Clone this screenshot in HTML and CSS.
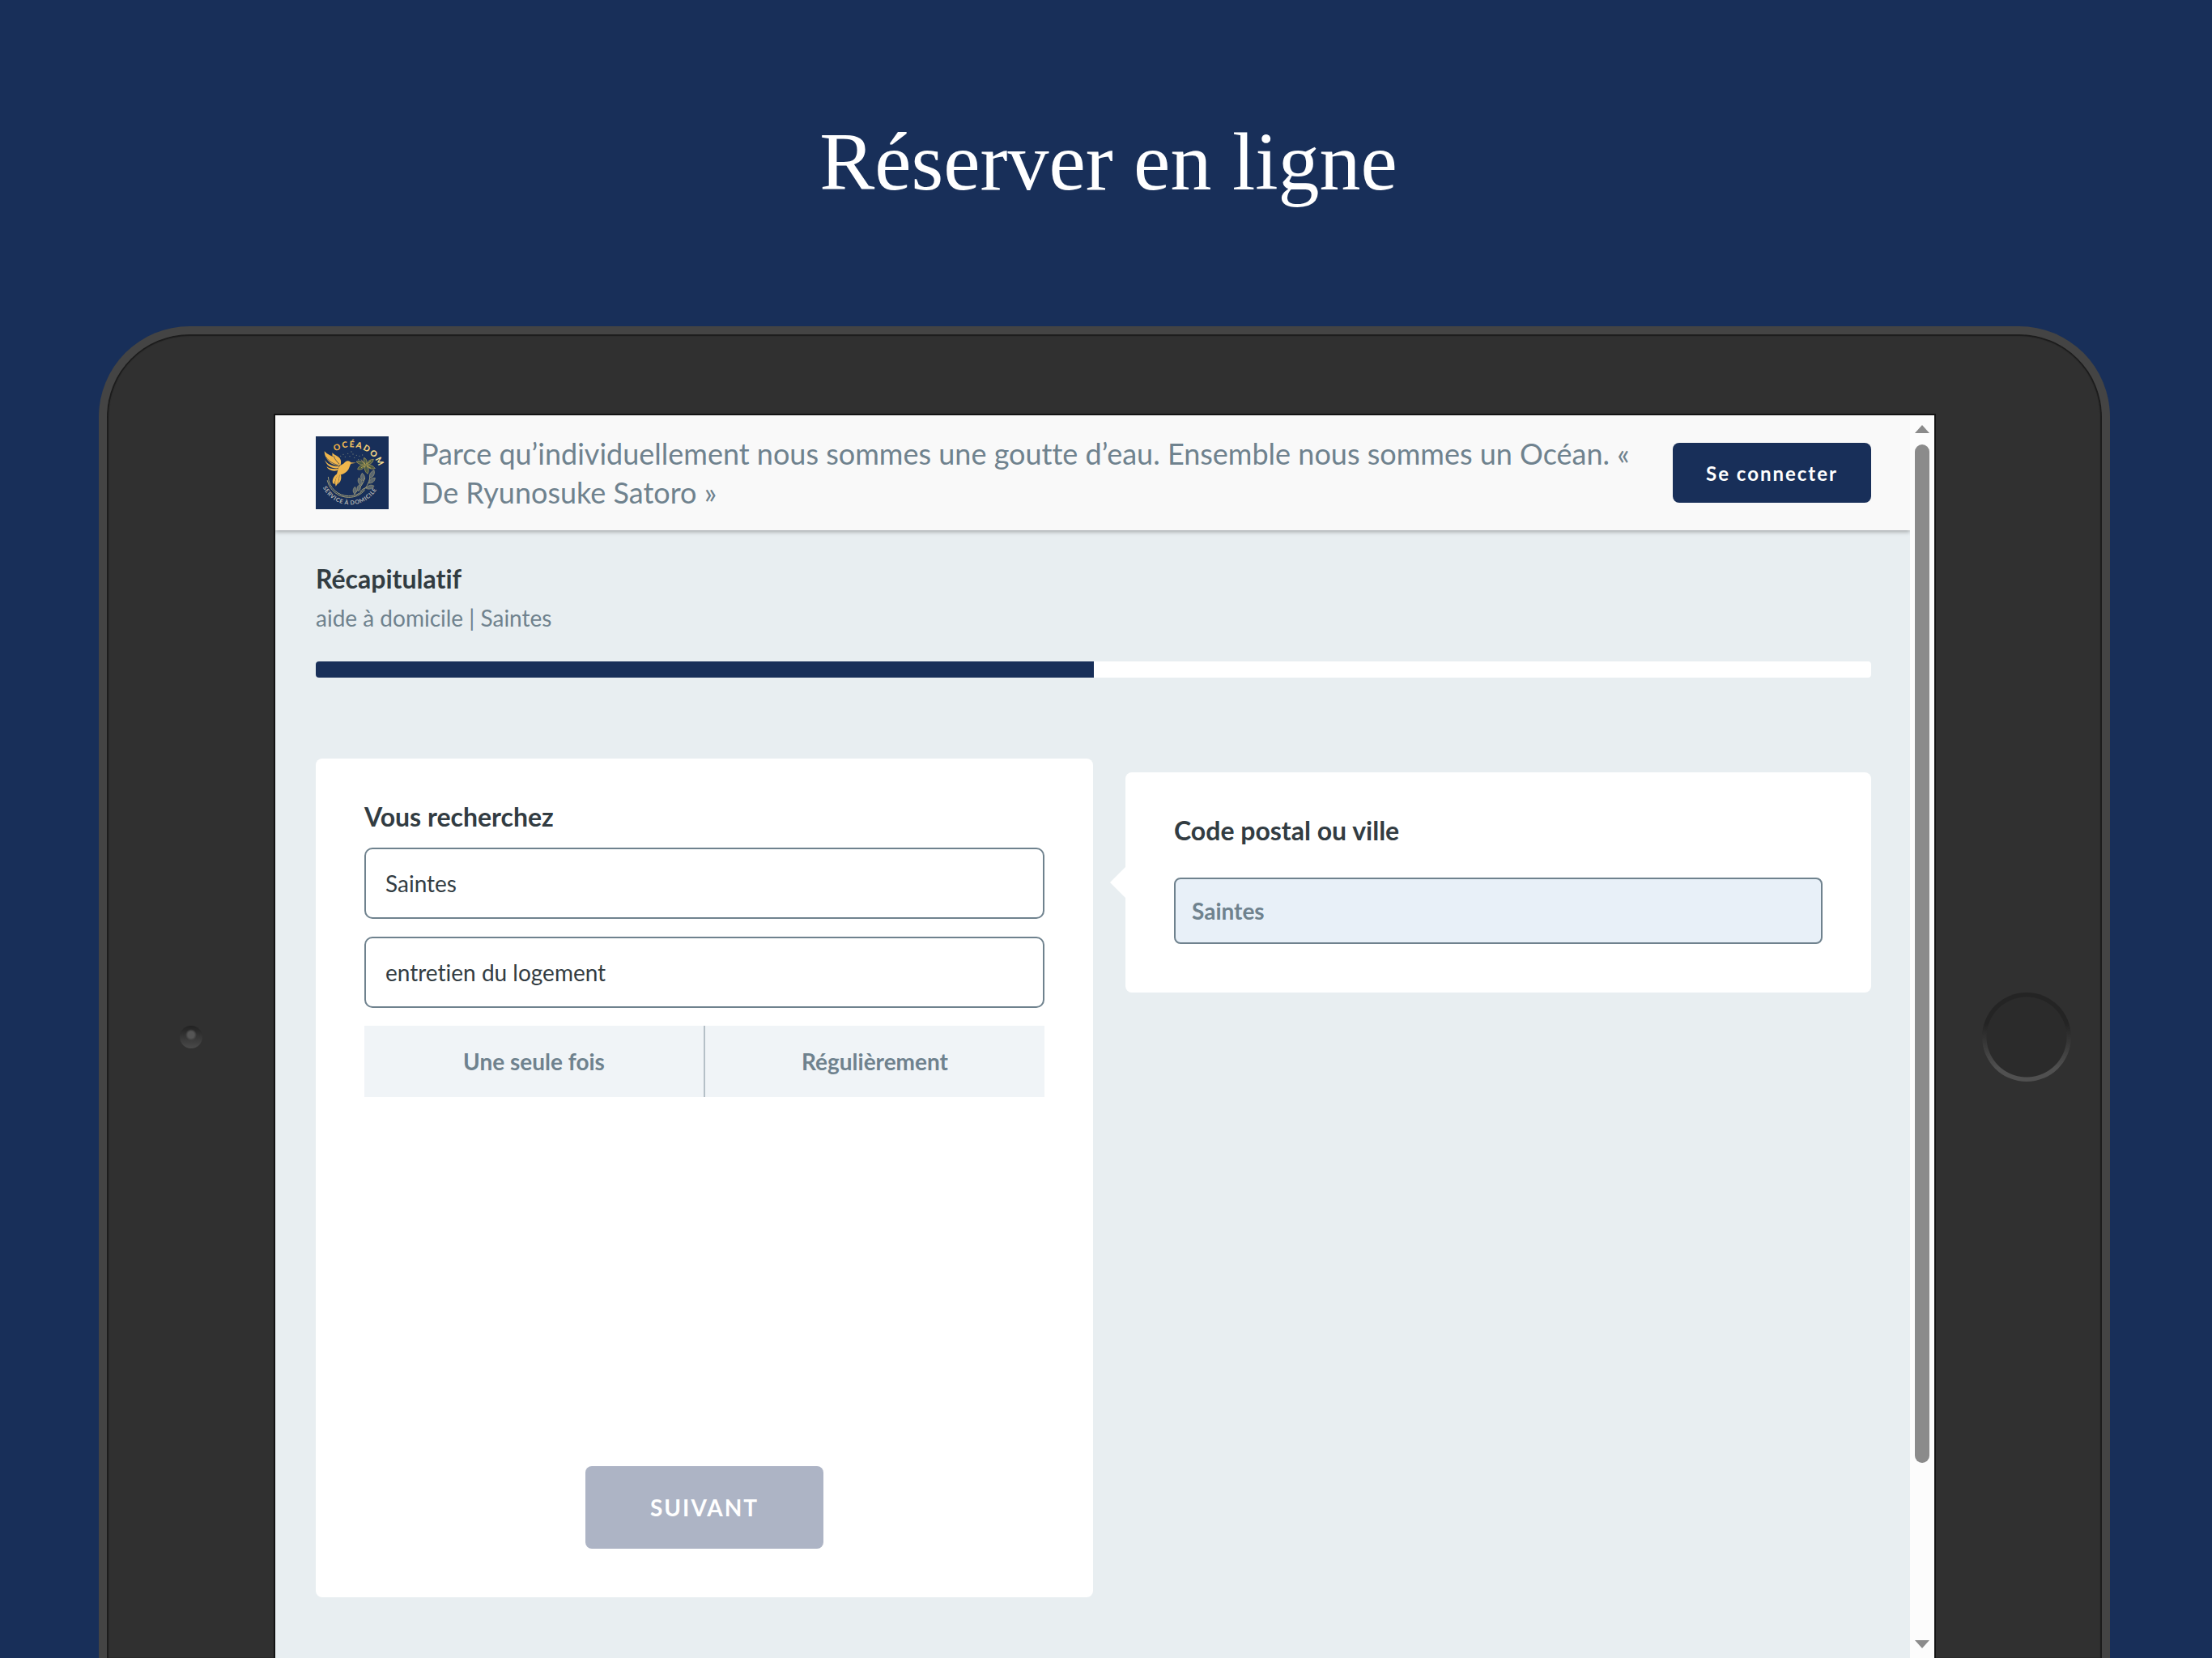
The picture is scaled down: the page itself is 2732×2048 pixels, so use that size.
FILE: index.html
```html
<!DOCTYPE html>
<html lang="fr">
<head>
    <meta charset="UTF-8">
    <meta name="viewport" content="width=device-width, initial-scale=1">
    <title>Océadom - Réserver en ligne</title>
    <link rel="stylesheet" href="styles.css">
</head>
<body>

<h1 class="page-title">Réserver en ligne</h1>

<div class="tablet">
    <div class="bezel"><span class="camera"></span></div>

    <div class="screen">
        <div class="app">

            <!-- Header -->
            <header class="header">
                <svg class="logo" viewBox="0 0 270 270" role="img" aria-label="Océadom, service à domicile">
                    <defs>
                        <path id="arc-top" d="M20 150a110 110 0 0 1 220 0"/>
                        <path id="arc-bottom" d="M15 140a113 113 0 0 0 226 0"/>
                        <linearGradient id="gold" x1="0" x2="1">
                            <stop offset="0" stop-color="#f0ad3c"/>
                            <stop offset="1" stop-color="#f4e39a"/>
                        </linearGradient>
                    </defs>
                    <rect width="270" height="270" fill="#182f59"/>
                    <text class="logo-name" fill="url(#gold)"><textPath href="#arc-top" startOffset="61%" text-anchor="middle">OCÉADOM</textPath></text>
                    <text class="logo-tag"><textPath href="#arc-bottom" startOffset="49%" text-anchor="middle">SERVICE À DOMICILE</textPath></text>
                    <!-- bird -->
                    <g fill="#f0b64c">
                        <path d="M32 55c0 20 12 38 30 48l25 9c4-14 0-25-12-31C58 73 42 67 32 55z"/>
                        <path d="M61 61c-1 15 5 27 16 36l14 11c5-14 2-26-9-33-8-5-16-8-21-14z"/>
                        <path d="M33 87c9 15 24 23 52 25l-2 6c-24 2-42-8-50-31z"/>
                        <path d="M40 112c12 9 27 11 45 7l-6 8c-16 4-32-1-39-15z"/>
                        <path d="M85 114c8-9 17-10 22-17 7-8 17-9 23 0l20 1-20 3c-5 8-6 20-14 28-8 9-24 15-40 16 4-8 5-21 9-31z"/>
                        <path d="M80 139c-14 8-20 22-17 34l7 5c0-13 4-25 13-35z"/>
                        <path d="M83 143c-11 10-13 27-9 42 8-9 13-24 13-42z"/>
                        <path d="M88 142c0 15-3 26-7 35 12-7 15-21 12-35z"/>
                    </g>
                    <g fill="none" stroke="#182f59" stroke-width="2">
                        <path d="M38 77c10 15 26 25 48 31M66 72c5 14 12 22 21 30"/>
                    </g>
                    <!-- flower and stems -->
                    <g fill="none" stroke="#a5a078" stroke-width="3" stroke-linecap="round">
                        <path d="M46 151c3 40 36 70 76 70 44 0 76-32 80-78"/>
                        <path d="M43 164c9 38 42 62 79 62 24 0 44-9 59-26"/>
                        <path d="M143 214c16-20 32-34 39-60M165 204c12-14 28-17 43-15"/>
                    </g>
                    <g fill="#5c6870" stroke="#a5a078" stroke-width="2">
                        <path d="M175 165c-11-8-10-20-3-29 11 9 12 20 3 29zM169 181c-13-5-15-17-10-27 12 6 16 17 10 27zM201 155c-5-14 3-25 15-30 4 15-2 25-15 30zM197 174c1-14 12-21 23-20-1 13-10 20-23 20zM187 193c6-12 18-16 29-9-7 11-18 14-29 9zM144 214c-8-9-7-19 1-27 8 9 8 19-1 27zM158 203c-8-9-5-18 4-24 6 9 5 18-4 24z"/>
                    </g>
                    <g fill="#4c5c45" stroke="#b8a45c" stroke-width="2">
                        <path d="M184 106c-5-10-8-17-5-27 9 4 12 12 9 23 5-12 14-16 26-17-2 12-11 19-23 21 13-1 22 3 29 13-13 4-24 0-31-9 7 9 9 18 3 29-9-7-13-17-9-28-7 10-16 14-28 11 3-11 13-17 24-16-13 0-21-4-29-12 12-5 24-2 34 12z"/>
                        <path d="M184 106l-16-20M186 106l18-15M185 108l-17 8M188 108l16 10" stroke="#e6be52"/>
                    </g>
                    <g fill="#6f7b74">
                        <circle cx="92" cy="73" r="2"/><circle cx="102" cy="67" r="2"/><circle cx="109" cy="76" r="2"/>
                        <circle cx="119" cy="64" r="2"/><circle cx="126" cy="74" r="2"/><circle cx="138" cy="66" r="2"/>
                        <circle cx="143" cy="79" r="2"/><circle cx="151" cy="70" r="2"/><circle cx="162" cy="73" r="2"/>
                        <circle cx="158" cy="86" r="2"/><circle cx="132" cy="57" r="2"/><circle cx="173" cy="69" r="2"/>
                    </g>
                </svg>
                <p class="slogan">Parce qu’individuellement nous sommes une goutte d’eau. Ensemble nous sommes un Océan. « De Ryunosuke Satoro »</p>
                <button type="button" class="btn btn-login">Se connecter</button>
            </header>

            <!-- Récapitulatif -->
            <section class="summary">
                <h2>Récapitulatif</h2>
                <p class="summary-text">aide à domicile | Saintes</p>
                <div class="progress"><div class="progress-bar" style="width: 50%"></div></div>
            </section>

            <!-- Formulaire -->
            <main class="steps">
                <form class="card search">
                    <h2>Vous recherchez</h2>
                    <input type="text" class="field" aria-label="Ville" value="Saintes">
                    <input type="text" class="field" aria-label="Service" value="entretien du logement">
                    <div class="frequency">
                        <button type="button">Une seule fois</button>
                        <button type="button">Régulièrement</button>
                    </div>
                    <button type="submit" class="btn btn-next" disabled>SUIVANT</button>
                </form>

                <div class="card place">
                    <label for="ville">Code postal ou ville</label>
                    <input type="text" id="ville" class="field field-filled" value="Saintes">
                </div>
            </main>
        </div>

        <div class="scrollbar">
            <svg class="arrow" viewBox="0 0 18 10"><path d="M9 0l9 10H0z"/></svg>
            <div class="track"><div class="thumb"></div></div>
            <svg class="arrow" viewBox="0 0 18 10"><path d="M0 0h18L9 10z"/></svg>
        </div>
    </div>

    <div class="bezel bezel-home"><span class="home"></span></div>
</div>

</body>
</html>
```
FILE: styles.css
```css
* { box-sizing: border-box; }
body { margin: 0; height: 100vh; display: flex; flex-direction: column; overflow: hidden; background: #182f59; font-family: Lato, sans-serif; font-variant-ligatures: none; color: #323c42; }
h1, h2, p { margin: 0; }
button, input { font-family: inherit; font-variant-ligatures: none; margin: 0; }

.page-title { padding: 140px 0 143px 6px; font: 400 102px/120px "Liberation Serif", serif; color: #fff; text-align: center; }

/* Tablet */
.tablet { flex: 1; min-height: 0; display: grid; grid-template-columns: 208px 1fr 207px; margin: 0 126px 0 122px; padding-top: 100px; border: 10px solid #444; border-bottom: 0; border-radius: 112px 112px 0 0; background: #303030; box-shadow: inset 0 2px 1px #1c1c1c, inset 2px 0 1px #1c1c1c, inset -2px 0 1px #1c1c1c; }
.bezel { display: flex; align-items: center; justify-content: center; }
.bezel-home { padding-left: 20px; }
.camera { width: 28px; height: 28px; border-radius: 50%; background: radial-gradient(circle at 50% 40%, #555 0 4px, transparent 7px), linear-gradient(#222, #4a4a4a); }
.home { width: 110px; height: 110px; border-radius: 50%; background: radial-gradient(circle closest-side, #2b2b2b 49px, transparent 50px), linear-gradient(#242424 35%, #505050 85%); }
.screen { display: flex; min-width: 0; min-height: 0; background: #fcfcfc; box-shadow: 0 0 0 2px #131313; }
.app { flex: 1; min-width: 0; background: #e8eef1; overflow: hidden; }

/* Header */
.header { display: flex; align-items: center; gap: 40px; padding: 23px 48px 23px 50px; background: #f9f9f9; box-shadow: 0 2px 5px rgba(0,0,0,0.3); }
.logo { flex: none; width: 90px; height: 90px; }
.logo-name { font: 900 31px Lato, sans-serif; letter-spacing: 5px; }
.logo-tag { font: 700 21px Lato, sans-serif; letter-spacing: 2px; fill: #b9b8b4; }
.slogan { flex: 1; font-size: 36px; line-height: 48px; color: #6f828e; }
.btn { border: 0; border-radius: 8px; background: #182f59; color: #fff; font-weight: 700; }
.btn-login { width: 245px; height: 74px; font-size: 24px; letter-spacing: 2px; }

/* Summary */
.summary { padding: 36px 48px 39px 50px; }
h2, label { display: block; font-size: 32px; line-height: 48px; font-weight: 700; }
.summary-text { font-size: 28px; line-height: 48px; color: #6f828e; }
.progress { margin-top: 30px; height: 20px; border-radius: 4px; background: #fff; overflow: hidden; }
.progress-bar { height: 100%; background: #182f59; }

/* Cards */
.steps { display: grid; grid-template-columns: 960fr 921fr; gap: 40px; align-items: start; padding: 61px 48px 0 50px; }
.card { background: #fff; border-radius: 8px; padding: 48px 60px 60px; }
.search { display: flex; flex-direction: column; min-height: 1036px; }
.field { width: 100%; height: 88px; padding: 0 24px; border: 2px solid #6f828e; border-radius: 10px; background: #fff; font-size: 28px; color: #323c42; }
.search .field { margin-bottom: 22px; }
.search h2 { margin-bottom: 14px; }
.frequency { display: flex; }
.frequency button { flex: 1; height: 88px; border: 0; background: #f0f4f7; font-size: 28px; font-weight: 700; color: #6f828e; }
.frequency button + button { border-left: 2px solid #b5c0c7; }
.btn-next { width: 294px; height: 102px; margin: auto auto 0; font-size: 28px; letter-spacing: 2px; background: #adb4c5; }

.place { position: relative; margin-top: 17px; }
.place::before { content: ""; position: absolute; left: -19px; top: 116px; border: 20px solid transparent; border-left: 0; border-right-color: #fff; }
.place .field { height: 82px; margin-top: 34px; padding: 0 20px; }
.field-filled { background: #e8f0f8; font-weight: 700; color: #6f828e; border-radius: 8px; }

/* Scrollbar */
.scrollbar { flex: none; width: 30px; display: flex; flex-direction: column; align-items: center; gap: 14px; padding: 12px 0; }
.arrow { width: 18px; height: 10px; fill: #8b8b8b; }
.track { flex: 1; width: 18px; }
.thumb { height: 86%; border-radius: 9px; background: #8b8b8b; }
```
